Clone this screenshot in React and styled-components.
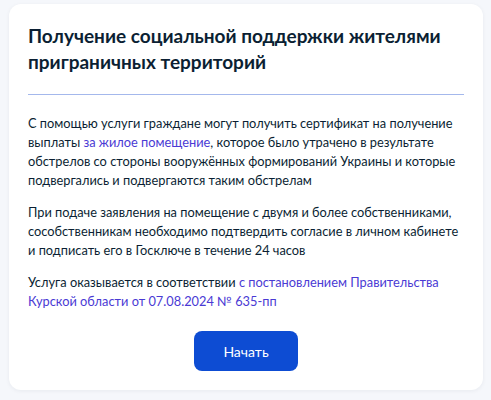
import React from "react";
import styled, { createGlobalStyle } from "styled-components";

const Global = createGlobalStyle`
  html, body { margin: 0; padding: 0; }
  body {
    background: #f5f7fb;
    font-family: Lato, "Noto Sans", sans-serif;
    color: #0b1f33;
  }
`;

const Page = styled.div`
  padding: 4px 8px 9px 9px;
`;

const Card = styled.section`
  background: #ffffff;
  border-radius: 12px;
  box-shadow: 0 1px 4px rgba(11, 31, 51, 0.06);
  padding: 19px 19px 19px;
  display: flex;
  flex-direction: column;
`;

const Title = styled.h1`
  margin: 0;
  font-size: 19px;
  line-height: 26px;
  font-weight: 700;
  color: #0b1f33;
  padding-bottom: 19px;
  border-bottom: 1px solid #a4b8ec;
`;

const Body = styled.div`
  padding-top: 19px;
  display: flex;
  flex-direction: column;
  gap: 13px;
`;

const Para = styled.p`
  margin: 0;
  font-size: 12.8px;
  line-height: 19px;
  color: #0b1f33;
`;

const Link = styled.a`
  color: #4a3ad4;
  text-decoration: none;
`;

const Actions = styled.div`
  display: flex;
  justify-content: center;
  padding-top: 20px;
`;

const Button = styled.button`
  width: 104px;
  height: 40px;
  border: none;
  border-radius: 8px;
  background: #0d4cd3;
  color: #ffffff;
  font-family: Lato, "Noto Sans", sans-serif;
  font-size: 14px;
  cursor: pointer;
`;

export default function App() {
  return (
    <>
      <Global />
      <Page>
        <Card>
          <Title>Получение социальной поддержки жителями приграничных территорий</Title>
          <Body>
            <Para>
              С помощью услуги граждане могут получить сертификат на получение выплаты{" "}
              <Link href="#">за жилое помещение</Link>, которое было утрачено в результате
              обстрелов со стороны вооружённых формирований Украины и которые подвергались и
              подвергаются таким обстрелам
            </Para>
            <Para>
              При подаче заявления на помещение с двумя и более собственниками, сособственникам
              необходимо подтвердить согласие в личном кабинете и подписать его в Госключе в
              течение 24 часов
            </Para>
            <Para>
              Услуга оказывается в соответствии{" "}
              <Link href="#">с постановлением Правительства Курской области от 07.08.2024 № 635-пп</Link>
            </Para>
          </Body>
          <Actions>
            <Button>Начать</Button>
          </Actions>
        </Card>
      </Page>
    </>
  );
}
